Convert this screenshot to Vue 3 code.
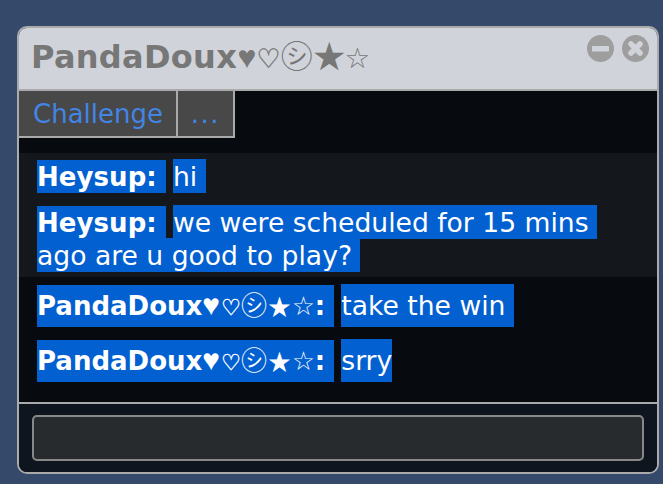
<script setup>
const nameParts = [
  { t: "PandaDoux", c: "" },
  { t: "♥", c: "g-heart" },
  { t: "♡", c: "g-hollow" },
  { t: "㋛", c: "g-circ" },
  { t: "★", c: "g-star" },
  { t: "☆", c: "g-ostar" },
]
const theirs = [
  { text: "hi\u00a0" },
  { text: "we were scheduled for 15 mins ago are u good to play?\u00a0" },
]
const mine = [
  { text: "take the win\u00a0" },
  { text: "srry" },
]
</script>

<template>
  <main class="desk">
    <section class="window">
      <header class="title">
        <h1><span v-for="p in nameParts" :key="p.t" :class="p.c">{{ p.t }}</span></h1>
        <div class="controls">
          <button class="ctl" aria-label="Minimize">
            <svg viewBox="0 0 27 27" width="27" height="27">
              <circle cx="13.5" cy="13.5" r="13.5" fill="#9e9e9e" />
              <rect x="5" y="11" width="17" height="5.5" rx="1" fill="#d0d4da" />
            </svg>
          </button>
          <button class="ctl" aria-label="Close">
            <svg viewBox="0 0 27 27" width="27" height="27">
              <circle cx="13.5" cy="13.5" r="13.5" fill="#9e9e9e" />
              <path d="M9 9l9 9M18 9l-9 9" stroke="#d0d4da" stroke-width="5.5" stroke-linecap="round" />
            </svg>
          </button>
        </div>
      </header>
      <nav class="tabs">
        <button class="tab">Challenge</button>
        <button class="tab more">...</button>
      </nav>
      <div class="log">
        <div class="group theirs">
          <p v-for="(m, i) in theirs" :key="i" class="msg">
            <span class="hl who">Heysup:&nbsp;</span>
            <span class="hl body">{{ m.text }}</span>
          </p>
        </div>
        <div class="group mine">
          <p v-for="(m, i) in mine" :key="i" class="msg">
            <span class="hl who"><span v-for="p in nameParts" :key="p.t" :class="p.c">{{ p.t }}</span>:&nbsp;</span>
            <span class="hl body">{{ m.text }}</span>
          </p>
        </div>
      </div>
      <footer class="compose">
        <div class="input"></div>
      </footer>
    </section>
  </main>
</template>

<style>
html, body {
  margin: 0;
  background: #354a6b;
}
</style>

<style scoped>
.desk {
  height: 484px;
  padding: 26px 4px 0 17px;
  box-sizing: border-box;
  font-family: "DejaVu Sans", sans-serif;
  overflow: hidden;
}
.window {
  height: 448px;
  box-sizing: border-box;
  border: 2px solid #aaaaaa;
  border-radius: 10px;
  overflow: hidden;
  display: flex;
  flex-direction: column;
  background: #070b10;
}
.title {
  height: 63px;
  flex: none;
  box-sizing: border-box;
  background: #d0d4da;
  border-bottom: 2px solid #aaaaaa;
  display: flex;
  justify-content: space-between;
  padding: 0 8px 0 12px;
}
h1 {
  margin: 8px 0 0;
  font-size: 32px;
  line-height: 42px;
  font-weight: bold;
  color: #777777;
  letter-spacing: 0.3px;
}
h1 span,
.who span {
  line-height: 0;
}
.g-heart {
  font-family: "Liberation Sans", sans-serif;
}
.g-hollow {
  font-family: "DejaVu Sans", sans-serif;
  font-weight: normal;
  font-size: 0.84em;
  -webkit-text-stroke: 0.4px currentColor;
}
.g-circ {
  font-family: "Noto Sans CJK JP", sans-serif;
  font-weight: normal;
}
.g-star {
  font-family: "Noto Sans CJK JP", sans-serif;
  font-weight: normal;
}
.g-ostar {
  font-family: "DejaVu Sans", sans-serif;
  font-weight: normal;
  font-size: 0.9em;
  margin-left: -1px;
}
.who .g-heart {
  font-size: 1.15em;
}
.who .g-hollow {
  margin-left: 1px;
  font-size: 0.86em;
}
.who .g-star {
  font-size: 0.88em;
  margin-left: 1px;
}
.who .g-ostar {
  font-size: 0.98em;
  margin-left: 1px;
}
.controls {
  display: flex;
  gap: 8px;
  padding-top: 7px;
}
.ctl {
  border: 0;
  padding: 0;
  background: none;
  width: 27px;
  height: 27px;
}
.tabs {
  display: flex;
  flex: none;
}
.tab {
  height: 47px;
  box-sizing: border-box;
  background: #484848;
  border: 0;
  border-right: 2px solid #aaaaaa;
  border-bottom: 2px solid #aaaaaa;
  color: #4285e4;
  font: 26px "DejaVu Sans", sans-serif;
  padding: 0 13px 0 14px;
}
.more {
  width: 57px;
  padding: 0;
  letter-spacing: 1.5px;
}
.log {
  flex: 1;
  padding-top: 15px;
}
.group {
  padding: 8px 30px 0 18px;
}
.theirs {
  background: #14181d;
  height: 124px;
  box-sizing: border-box;
}
.msg {
  margin: 0 0 13px;
  font-size: 26px;
  line-height: 33px;
  color: #ffffff;
}
.mine .msg {
  line-height: 42px;
}
.hl {
  background: #0360d0;
  padding: 2px 0 1px;
  -webkit-box-decoration-break: clone;
  box-decoration-break: clone;
}
.mine .hl {
  padding: 6px 0 6px;
}
.who {
  font-weight: bold;
  margin-right: 7px;
}
.theirs .who {
  letter-spacing: 0.06px;
}
.body {
  font-size: 26.6px;
  line-height: 1;
  white-space: pre-wrap;
}
.compose {
  height: 70px;
  flex: none;
  box-sizing: border-box;
  background: #0f151e;
  border-top: 2px solid #aaaaaa;
  padding: 11px 13px 0;
}
.input {
  height: 46px;
  box-sizing: border-box;
  background: #282b2e;
  border: 2px solid #888888;
  border-radius: 5px;
}
</style>
